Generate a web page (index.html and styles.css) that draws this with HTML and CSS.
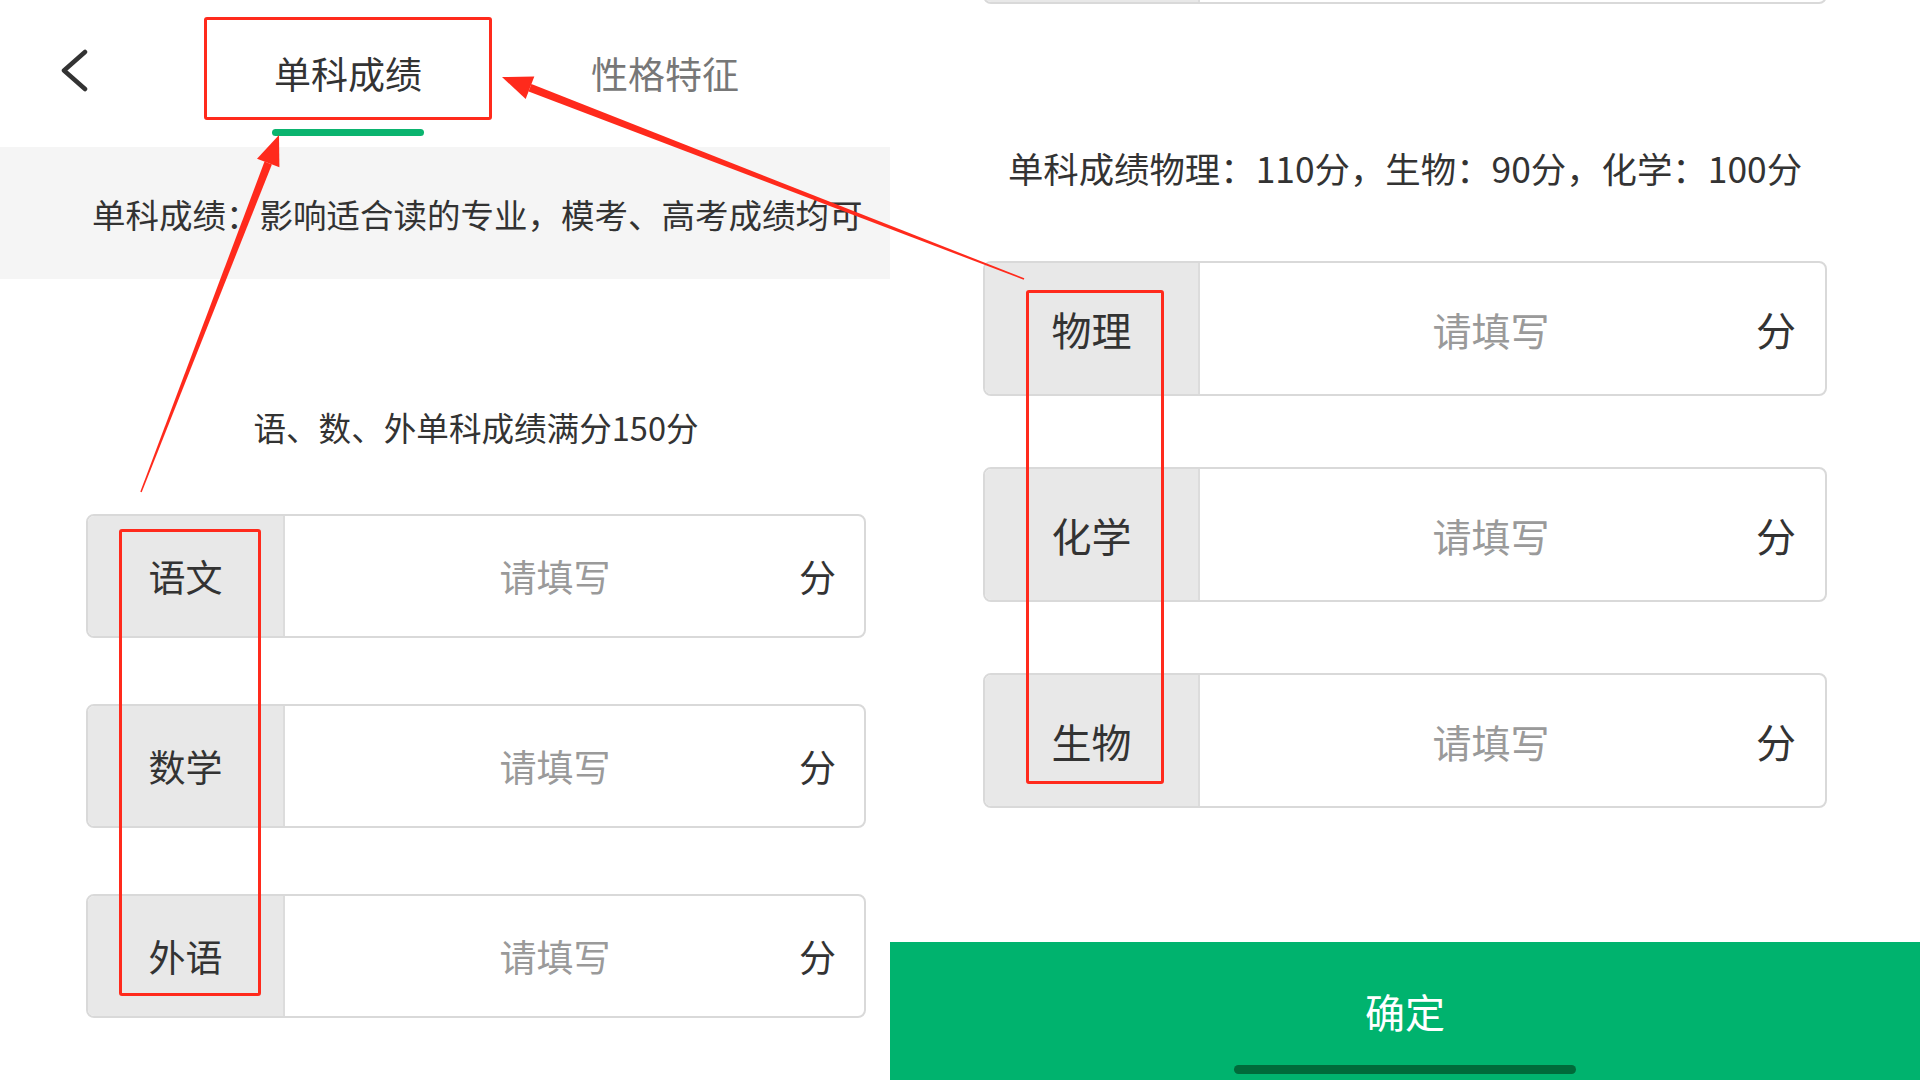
FILE: index.html
```html
<!DOCTYPE html>
<html>
    <head>
        <meta charset="UTF-8">
        <title>单科成绩</title>
        <link rel="stylesheet" href="styles.css">
    </head>
    <body>
        <div class="page">
            <!-- left phone screenshot -->
            <section class="shot shot-left">
                <header class="topbar">
                    <svg class="back" width="27" height="43" viewBox="0 0 27 43">
                        <polyline points="24,3 3,21.5 24,40" fill="none" stroke="#333" stroke-width="4.5" stroke-linecap="round" stroke-linejoin="round"/>
                    </svg>
                    <div class="tab active">
                        <span>单科成绩</span>
                        <i class="tab-bar"></i>
                    </div>
                    <div class="tab">
                        <span>性格特征</span>
                    </div>
                </header>
                <div class="band">单科成绩：影响适合读的专业，模考、高考成绩均可</div>
                <div class="form">
                    <p class="tip">语、数、外单科成绩满分150分</p>
                    <div class="row">
                        <div class="label">语文</div>
                        <div class="field">请填写</div>
                        <div class="unit">分</div>
                    </div>
                    <div class="row">
                        <div class="label">数学</div>
                        <div class="field">请填写</div>
                        <div class="unit">分</div>
                    </div>
                    <div class="row">
                        <div class="label">外语</div>
                        <div class="field">请填写</div>
                        <div class="unit">分</div>
                    </div>
                </div>
            </section>

            <!-- right phone screenshot, scrolled down -->
            <section class="shot shot-right">
                <div class="form form-big">
                    <div class="row row-stub">
                        <div class="label"></div>
                    </div>
                    <p class="tip">单科成绩物理：110分，生物：90分，化学：100分</p>
                    <div class="row">
                        <div class="label">物理</div>
                        <div class="field">请填写</div>
                        <div class="unit">分</div>
                    </div>
                    <div class="row">
                        <div class="label">化学</div>
                        <div class="field">请填写</div>
                        <div class="unit">分</div>
                    </div>
                    <div class="row">
                        <div class="label">生物</div>
                        <div class="field">请填写</div>
                        <div class="unit">分</div>
                    </div>
                </div>
                <div class="confirm">
                    <span>确定</span>
                    <i class="home-bar"></i>
                </div>
            </section>

            <!-- red annotations drawn over the screenshots -->
            <div class="marks">
                <div class="mark mark-tab"></div>
                <div class="mark mark-left"></div>
                <div class="mark mark-right"></div>
                <svg class="arrows" width="1920" height="1080" viewBox="0 0 1920 1080">
                    <polygon fill="#ff2a1c" points="141.7,492.3 140.3,491.7 264.5,161.6 271.9,164.4"/>
                    <polygon fill="#ff2a1c" points="279,135 279.4,167.3 257,158.7"/>
                    <polygon fill="#ff2a1c" points="1024.3,278.3 1023.7,279.7 528.6,91.5 531.4,84.1"/>
                    <polygon fill="#ff2a1c" points="502,77 534.3,76.6 525.7,99"/>
                </svg>
            </div>
        </div>
    </body>
</html>
```

FILE: styles.css
```css
*{
    box-sizing: border-box;
}

body{
    margin: 0;
    background: #fff;
    color: #333;
    font-family: "Noto Sans CJK SC", "Noto Sans", sans-serif;
}

.page{
    position: relative;
    display: flex;
    width: 1920px;
    height: 1080px;
    overflow: hidden;
}

.shot{
    height: 1080px;
    overflow: hidden;
}

.shot-left{
    width: 890px;
}

.shot-right{
    flex: 1;
    display: flex;
    flex-direction: column;
}

/* top tabs */
.topbar{
    display: flex;
    align-items: flex-start;
    height: 147px;
}

.back{
    margin: 49px 0 0 61px;
}

.tab{
    display: flex;
    flex-direction: column;
    align-items: center;
    padding-top: 50px;
    font-size: 37px;
    line-height: 46px;
    color: #777;
}

.tab.active{
    width: 288px;
    margin-left: 116px;
    color: #333;
}

.tab:last-child{
    width: 200px;
    margin-left: 73px;
}

.tab-bar{
    width: 152px;
    height: 7px;
    margin-top: 33px;
    border-radius: 4px;
    background: #0bb46f;
}

.band{
    display: flex;
    align-items: center;
    height: 132px;
    padding-left: 92px;
    background: #f5f5f5;
    font-size: 33.5px;
}

/* score rows */
.form{
    padding: 0 24px 0 86px;
}

.tip{
    margin: 126px 0 65px;
    text-align: center;
    font-size: 32.6px;
    line-height: 44px;
}

.row{
    display: flex;
    align-items: center;
    height: 124px;
    margin-bottom: 66px;
    border: 2px solid #d9d9d9;
    border-radius: 8px;
    overflow: hidden;
    background: #fff;
    font-size: 37px;
}

.label{
    align-self: stretch;
    display: flex;
    align-items: center;
    justify-content: center;
    width: 197px;
    background: #e8e8e8;
    border-right: 2px solid #dcdcdc;
}

.field{
    flex: 1;
    padding-left: 26px;
    text-align: center;
    color: #9a9a9a;
}

.unit{
    margin-right: 28px;
}

.form-big{
    padding: 0 93px;
}

.form-big .row{
    height: 135px;
    margin-bottom: 71px;
    font-size: 40px;
}

.form-big .row-stub{
    margin-top: -131px;
    margin-bottom: 0;
}

.form-big .label{
    width: 215px;
}

.form-big .field{
    font-size: 39px;
}

.form-big .unit{
    margin-right: 29px;
}

.form-big .tip{
    margin: 140px 0 69px;
    font-size: 35.4px;
    line-height: 48px;
}

.confirm{
    position: relative;
    display: flex;
    align-items: center;
    justify-content: center;
    height: 138px;
    margin-top: auto;
    background: #00b36e;
    color: #fff;
    font-size: 40px;
}

.home-bar{
    position: absolute;
    left: 344px;
    bottom: 6px;
    width: 342px;
    height: 9px;
    border-radius: 5px;
    background: #006a3a;
}

/* annotations */
.marks{
    position: absolute;
    inset: 0;
    pointer-events: none;
}

.mark{
    position: absolute;
    border: 3px solid #ff2a1c;
    border-radius: 3px;
}

.mark-tab{
    left: 204px;
    top: 17px;
    width: 288px;
    height: 103px;
}

.mark-left{
    left: 119px;
    top: 529px;
    width: 142px;
    height: 467px;
}

.mark-right{
    left: 1026px;
    top: 290px;
    width: 138px;
    height: 494px;
}

.arrows{
    position: absolute;
    left: 0;
    top: 0;
}
```
